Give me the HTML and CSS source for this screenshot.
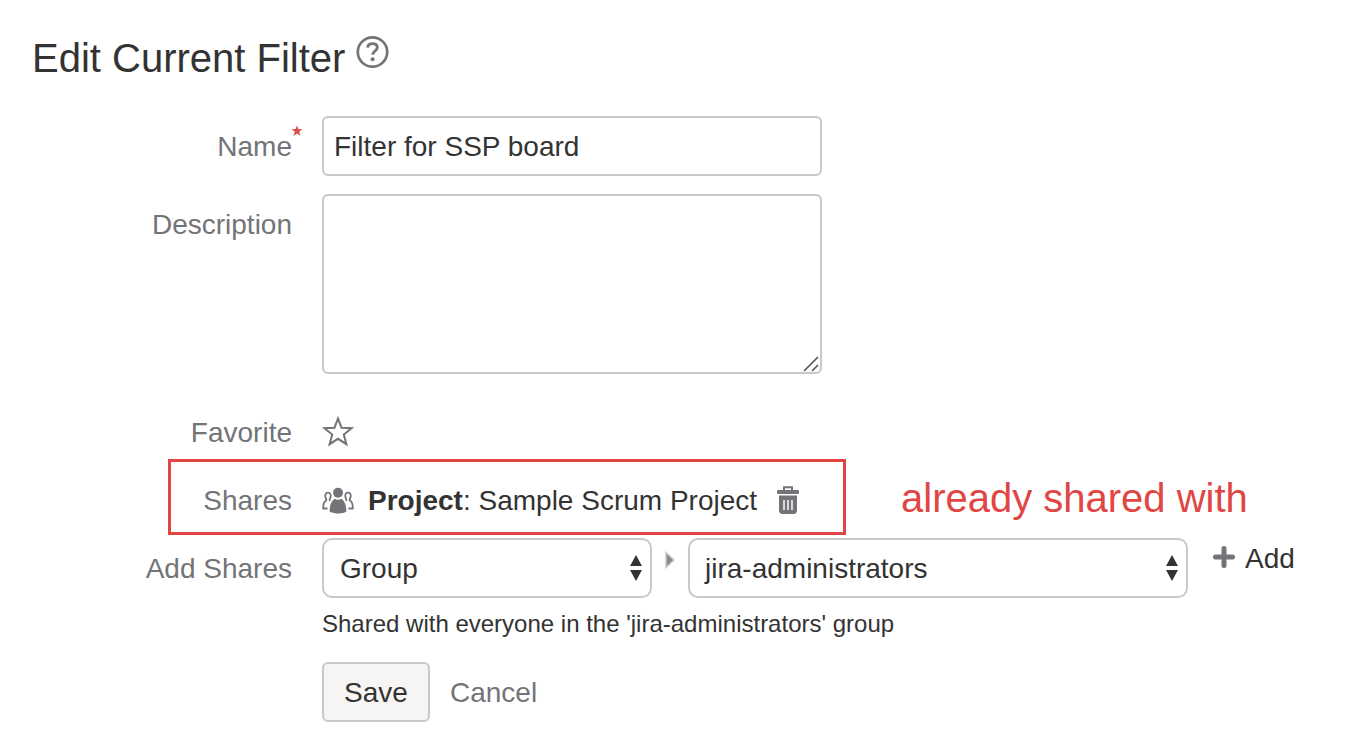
FILE: index.html
```html
<!DOCTYPE html>
<html lang="en">
<head>
<meta charset="utf-8">
<title>Edit Current Filter</title>
<link rel="stylesheet" href="styles.css">
</head>
<body>
<main class="page">
  <header class="page-header">
    <h1 class="title">Edit Current Filter</h1>
    <svg class="help" viewBox="0 0 34 34" width="34" height="34" fill="none" stroke="#737478">
      <circle cx="16.500" cy="17" r="14.700" stroke-width="2.700"/>
      <path d="M11.600 12.600c.3-2.600 2.200-3.900 4.900-3.900 2.900 0 4.800 1.500 4.800 3.900 0 3.300-4.600 3.300-4.600 7.200" stroke-width="2.800"/>
      <circle cx="16.600" cy="24.200" r="2" fill="#737478" stroke="none"/>
    </svg>
  </header>

  <form class="form">
    <div class="row row-name">
      <label class="label" for="name">Name<svg class="required" viewBox="0 0 12 12" width="12" height="12"><path d="M6 .5l1.400 3.600 4 .1-3.100 2.500 1.200 4.300L6 8.600 2.500 11l1.200-4.300L.6 4.200l4-.1z" fill="#d9504c"/></svg></label>
      <input class="text-field" id="name" type="text" value="Filter for SSP board">
    </div>

    <div class="row row-description">
      <label class="label" for="description">Description</label>
      <div class="textarea-box">
        <textarea class="textarea" id="description"></textarea>
        <svg class="grip" viewBox="0 0 16 16" width="16" height="16" stroke="#555" stroke-width="1.600"><path d="M1 15L15 1M9 15l6-6"/></svg>
      </div>
    </div>

    <div class="row row-favorite">
      <span class="label">Favorite</span>
      <svg class="star" viewBox="0 0 32 32" width="32" height="32" fill="none" stroke="#737478" stroke-width="2"><path d="M16 2.500l3.500 9.200 10 .5-7.700 6.300 2.600 9.700-8.400-5.400-8.400 5.400 2.600-9.700-7.700-6.300 10-.5z"/></svg>
    </div>

    <div class="shares-row">
      <div class="shares-box">
        <span class="label">Shares</span>
        <svg class="people" viewBox="0 0 32 28" width="32" height="28" fill="#737478">
          <g fill="none" stroke="#737478" stroke-width="1.800">
            <path d="M5.500 21.500H1.300c-.3-4.200.3-6.400 2.600-7.700.8-.5.500-1.300 0-2.300-1.300-2.900-.6-5.800 2-5.800 2.700 0 3.600 2.900 2.100 5.800-.5 1-.7 1.600.2 2.200"/>
            <path d="M26.500 21.500h4.200c.3-4.200-.3-6.400-2.600-7.700-.8-.5-.5-1.300 0-2.300 1.300-2.900.6-5.800-2-5.800-2.700 0-3.600 2.900-2.100 5.800.5 1 .7 1.600-.2 2.200"/>
          </g>
          <circle cx="16" cy="5.800" r="5"/>
          <path d="M12.500 11.800c2.300 1.300 4.700 1.300 7 0 3.200 2.200 4.900 6.700 4.900 12.400-1.700 2.900-15.100 2.900-16.800 0 0-5.700 1.700-10.200 4.900-12.400z"/>
        </svg>
        <span class="share-text"><b>Project</b>: Sample Scrum Project</span>
        <svg class="trash" viewBox="0 0 22 28" width="22" height="28" fill="#737478">
          <path d="M7 4V1.300h8V4" fill="none" stroke="#737478" stroke-width="2"/>
          <rect x="0" y="4" width="22" height="4" rx="1"/>
          <path d="M2 9.500h18v15c0 2.300-1.200 3.500-3.500 3.500h-11C3.200 28 2 26.800 2 24.500z"/>
          <path d="M7 14v10M11 14v10M15 14v10" stroke="#e4e4e4" stroke-width="1.800"/>
        </svg>
      </div>
      <span class="note">already shared with</span>
    </div>

    <div class="row row-add">
      <span class="label">Add Shares</span>
      <div class="add-controls">
        <div class="select select-type"><span class="select-text">Group</span>
          <svg viewBox="0 0 12 26" width="12" height="26" fill="#333"><path d="M6 0l6 11H0zM0 15h12L6 26z"/></svg></div>
        <svg class="pointer" viewBox="0 0 10 18" width="10" height="18"><path d="M1 1.500L9 9l-8 7.500z" fill="#8a8a8c" stroke="#ccc8c4" stroke-width="1.500"/></svg>
        <div class="select select-group"><span class="select-text">jira-administrators</span>
          <svg viewBox="0 0 12 26" width="12" height="26" fill="#333"><path d="M6 0l6 11H0zM0 15h12L6 26z"/></svg></div>
        <span class="add-link"><svg class="plus" viewBox="0 0 22 22" width="22" height="22"><path d="M11 2.500v17M2.500 11h17" stroke="#737478" stroke-width="5" stroke-linecap="round"/></svg>Add</span>
      </div>
    </div>

    <p class="hint">Shared with everyone in the 'jira-administrators' group</p>

    <div class="actions">
      <button class="save" type="button">Save</button>
      <span class="cancel">Cancel</span>
    </div>
  </form>
</main>
</body>
</html>
```
FILE: styles.css
```css
* { box-sizing: border-box; }

body {
  margin: 0;
  background: #fff;
  color: #333;
  font: 28px/32px "Liberation Sans", Arial, sans-serif;
}

.page { height: 754px; overflow: hidden; white-space: nowrap; }

.page-header {
  display: flex;
  height: 116px;
  padding: 35px 0 0 32px;
}

.title {
  margin: 0;
  width: 324px;
  font-size: 40px;
  font-weight: 400;
  line-height: 46px;
}

.form { display: flex; flex-direction: column; }

.row {
  display: grid;
  grid-template-columns: 292px 1fr;
  column-gap: 30px;
}

.label { position: relative; color: #737478; text-align: right; }

.row-name { height: 60px; margin-bottom: 18px; }
.row-name .label,
.row-description .label,
.row-add .label { padding-top: 15px; }

.required { position: absolute; top: 9px; right: -11px; }

.text-field {
  width: 500px;
  height: 60px;
  padding: 2px 10px 0;
  border: 2px solid #c8c8c8;
  border-radius: 6px;
  background: #fff;
  color: #333;
  font: inherit;
}

.row-description { height: 180px; margin-bottom: 42px; }

.textarea-box { position: relative; width: 500px; height: 180px; }

.textarea {
  display: block;
  width: 500px;
  height: 180px;
  padding: 10px;
  border: 2px solid #c8c8c8;
  border-radius: 6px;
  font: inherit;
  resize: none;
}

.grip { position: absolute; right: 3px; bottom: 2px; }

.row-favorite { height: 43px; }
.row-favorite .label { padding-top: 1px; }

.shares-row {
  display: flex;
  align-items: center;
  margin: 0 0 3px 168px;
}

.shares-box {
  display: flex;
  align-items: center;
  width: 678px;
  height: 76px;
  padding-top: 5px;
  border: 3px solid #e04644;
}

.shares-box .label { width: 121px; padding-top: 2px; }
.people { margin: 2px 14px 0 30px; }
.share-text { width: 409px; padding-top: 2px; }

.note {
  margin-left: 55px;
  padding-top: 2px;
  color: #e04644;
  font-size: 40px;
}

.row-add { height: 60px; margin-bottom: 10px; }

.add-controls { display: flex; }

.select {
  display: flex;
  align-items: center;
  justify-content: space-between;
  height: 60px;
  padding: 0 8px 0 16px;
  border: 2px solid #c8c8c8;
  border-radius: 10px;
}

.select-text { padding-top: 2px; }
.select-type { width: 330px; }
.select-group { width: 500px; padding-left: 15px; }
.pointer { margin: 13px; }

.add-link {
  display: flex;
  gap: 10px;
  height: 32px;
  margin: 5px 0 0 25px;
}

.plus { margin-top: 3px; }

.hint {
  margin: 0 0 22px 322px;
  font-size: 24px;
  line-height: 32px;
}

.actions {
  display: flex;
  align-items: center;
  gap: 20px;
  margin-left: 322px;
}

.save {
  width: 108px;
  height: 60px;
  padding: 2px 0 0;
  border: 2px solid #c8c8c8;
  border-radius: 6px;
  background: #f6f5f4;
  color: #333;
  font: inherit;
}

.cancel { padding-top: 2px; color: #737478; }
```
